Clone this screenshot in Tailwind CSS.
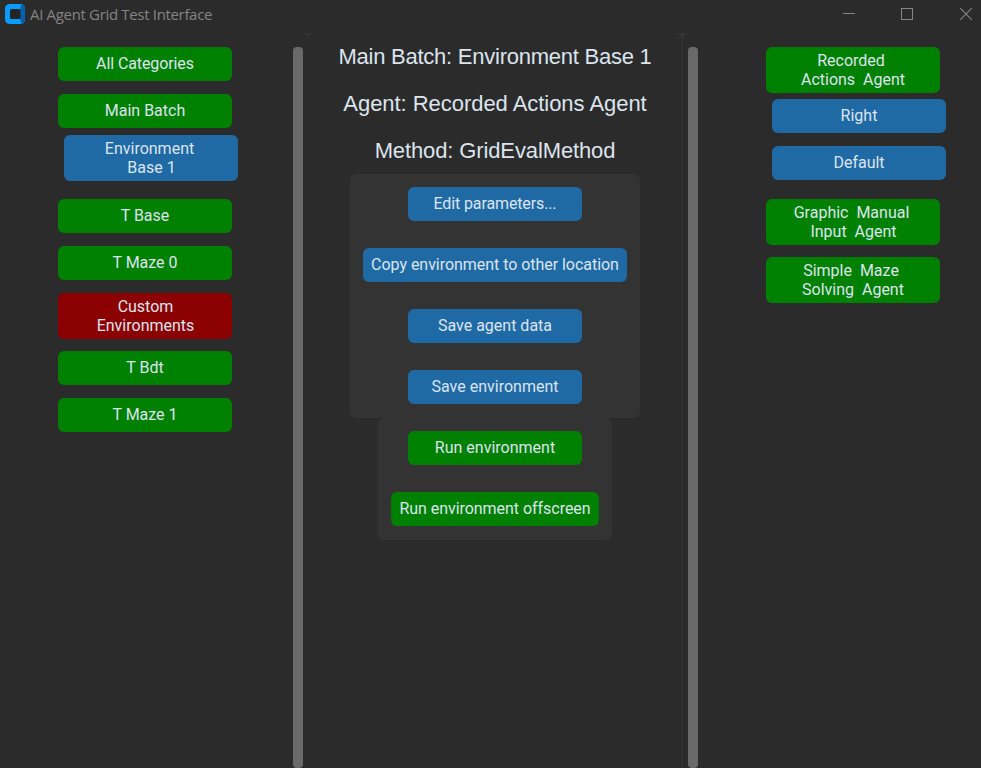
<!DOCTYPE html>
<html lang="en">
<head>
<meta charset="utf-8">
<title>AI Agent Grid Test Interface</title>
<script src="https://cdn.jsdelivr.net/npm/@tailwindcss/browser@4"></script>
</head>
<body class="bg-[#2b2b2b] overflow-hidden">
<div class="w-[981px] h-[768px] flex flex-col overflow-hidden font-['Roboto',sans-serif] text-[16px] leading-[19px] text-[#dce4ee]">
  <header class="h-[33px] shrink-0 flex items-start justify-between pl-[5px] pr-[9px] text-[#848484]">
    <div class="flex pt-1">
      <svg class="w-5 h-5 shrink-0" viewBox="0 0 20 20"><path d="M5 0H15Q20 0 20 5V15Q20 20 15 20H5Q0 20 0 15V5Q0 0 5 0Z" fill="#0a9bff"/><path d="M15 5.500L16.500 0.300Q20 1 20 5V15Q20 19 16.500 19.700L15 14.500Z" fill="#0560ad"/><rect x="5" y="5" width="10.500" height="10" rx="1.500" fill="#242424"/></svg>
      <h1 class="ml-[5px] font-['Open_Sans','Noto_Sans',sans-serif] text-[15px] leading-[20px] tracking-[-0.33px] whitespace-nowrap">AI Agent Grid Test Interface</h1>
    </div>
    <div class="flex pt-2">
      <svg class="w-3 h-3 mr-[46px]" viewBox="0 0 12 12"><path d="M0 5.500H12" stroke="currentColor"/></svg>
      <svg class="w-3 h-3 mr-[47px]" viewBox="0 0 12 12"><rect x=".5" y=".5" width="11" height="11" fill="none" stroke="currentColor"/></svg>
      <svg class="w-3 h-3" viewBox="0 0 12 12"><path d="M.2.200L11.800 11.800M11.800.200L.2 11.800" stroke="currentColor" stroke-width="1.200"/></svg>
    </div>
  </header>
  <div class="flex flex-1 min-h-0">
    <nav class="w-[303px] flex justify-between pt-[14px] pl-[58px]">
      <div class="flex flex-col">
        <button class="w-[174px] h-[34px] pb-0.5 rounded-md bg-[#008000] tracking-[-0.1px]">All Categories</button>
        <button class="w-[174px] h-[34px] pb-0.5 mt-[13px] rounded-md bg-[#008000]">Main Batch</button>
        <button class="w-[174px] h-[46px] pl-px mt-[7px] ml-[6px] rounded-md bg-[#1f6aa5] whitespace-pre">Environment 
Base 1</button>
        <button class="w-[174px] h-[34px] pb-0.5 mt-[18px] rounded-md bg-[#008000]">T Base</button>
        <button class="w-[174px] h-[34px] pb-0.5 mt-[13px] rounded-md bg-[#008000]">T Maze 0</button>
        <button class="w-[174px] h-[46px] pl-px mt-[13px] rounded-md bg-[#8b0000] whitespace-pre">Custom
Environments</button>
        <button class="w-[174px] h-[34px] pb-0.5 mt-[12px] rounded-md bg-[#008000]">T Bdt</button>
        <button class="w-[174px] h-[34px] pb-0.5 mt-[13px] rounded-md bg-[#008000]">T Maze 1</button>
      </div>
      <div class="w-[10px] rounded-[4px] bg-[#696969]"></div>
    </nav>
    <svg class="w-[11px] h-[5px]" viewBox="0 0 11 5"><path d="M-1 0H11Q7 1 5 5Q3 1-1 0Z" fill="#333"/></svg>
    <main class="w-[362px] flex flex-col items-center">
      <div class="flex flex-col items-center gap-[19px] pt-[10px] pb-[9px] font-['Liberation_Sans',Arial,sans-serif] text-[22px] leading-[28px] whitespace-nowrap">
        <h2 class="tracking-[-0.24px]">Main Batch: Environment Base 1</h2>
        <h2 class="tracking-[-0.04px]">Agent: Recorded Actions Agent</h2>
        <h2 class="tracking-[-0.12px]">Method: GridEvalMethod</h2>
      </div>
      <section class="w-[290px] h-[244px] shrink-0 rounded-md bg-[#333] pt-[13px] flex flex-col items-center gap-[27px]">
        <button class="w-[174px] h-[34px] pb-0.5 rounded-md bg-[#1f6aa5] tracking-[-0.12px]">Edit parameters...</button>
        <button class="w-[264px] h-[34px] pb-0.5 rounded-md bg-[#1f6aa5] tracking-[-0.04px]">Copy environment to other location</button>
        <button class="w-[174px] h-[34px] pb-0.5 rounded-md bg-[#1f6aa5]">Save agent data</button>
        <button class="w-[174px] h-[34px] pb-0.5 rounded-md bg-[#1f6aa5]">Save environment</button>
      </section>
      <section class="w-[234px] h-[122px] shrink-0 rounded-md bg-[#333] pt-[13px] flex flex-col items-center gap-[27px]">
        <button class="w-[174px] h-[34px] pb-0.5 rounded-md bg-[#008000]">Run environment</button>
        <button class="w-[208px] h-[34px] pb-0.5 rounded-md bg-[#008000] tracking-[-0.04px]">Run environment offscreen</button>
      </section>
    </main>
    <div class="w-[12px] flex flex-col items-center">
      <svg class="w-3 h-[5px]" viewBox="0 0 12 5"><path d="M0 0H12Q8 1 6.500 5H5.500Q4 1 0 0Z" fill="#363636"/></svg>
      <div class="w-px flex-1 bg-[#333]"></div>
    </div>
    <aside class="flex-1 flex pt-[14px]">
      <div class="w-[10px] rounded-[4px] bg-[#696969]"></div>
      <div class="flex flex-col ml-[68px]">
        <button class="w-[174px] h-[46px] rounded-md bg-[#008000] whitespace-pre">Recorded 
Actions  Agent</button>
        <button class="w-[174px] h-[34px] pb-0.5 mt-[6px] ml-[6px] rounded-md bg-[#1f6aa5]">Right</button>
        <button class="w-[174px] h-[34px] pb-0.5 mt-[13px] ml-[6px] rounded-md bg-[#1f6aa5]">Default</button>
        <button class="w-[174px] h-[46px] pl-px mt-[19px] rounded-md bg-[#008000] whitespace-pre">Graphic  Manual 
Input  Agent</button>
        <button class="w-[174px] h-[46px] mt-[12px] rounded-md bg-[#008000] whitespace-pre">Simple  Maze 
Solving  Agent</button>
      </div>
    </aside>
  </div>
</div>
</body>
</html>
